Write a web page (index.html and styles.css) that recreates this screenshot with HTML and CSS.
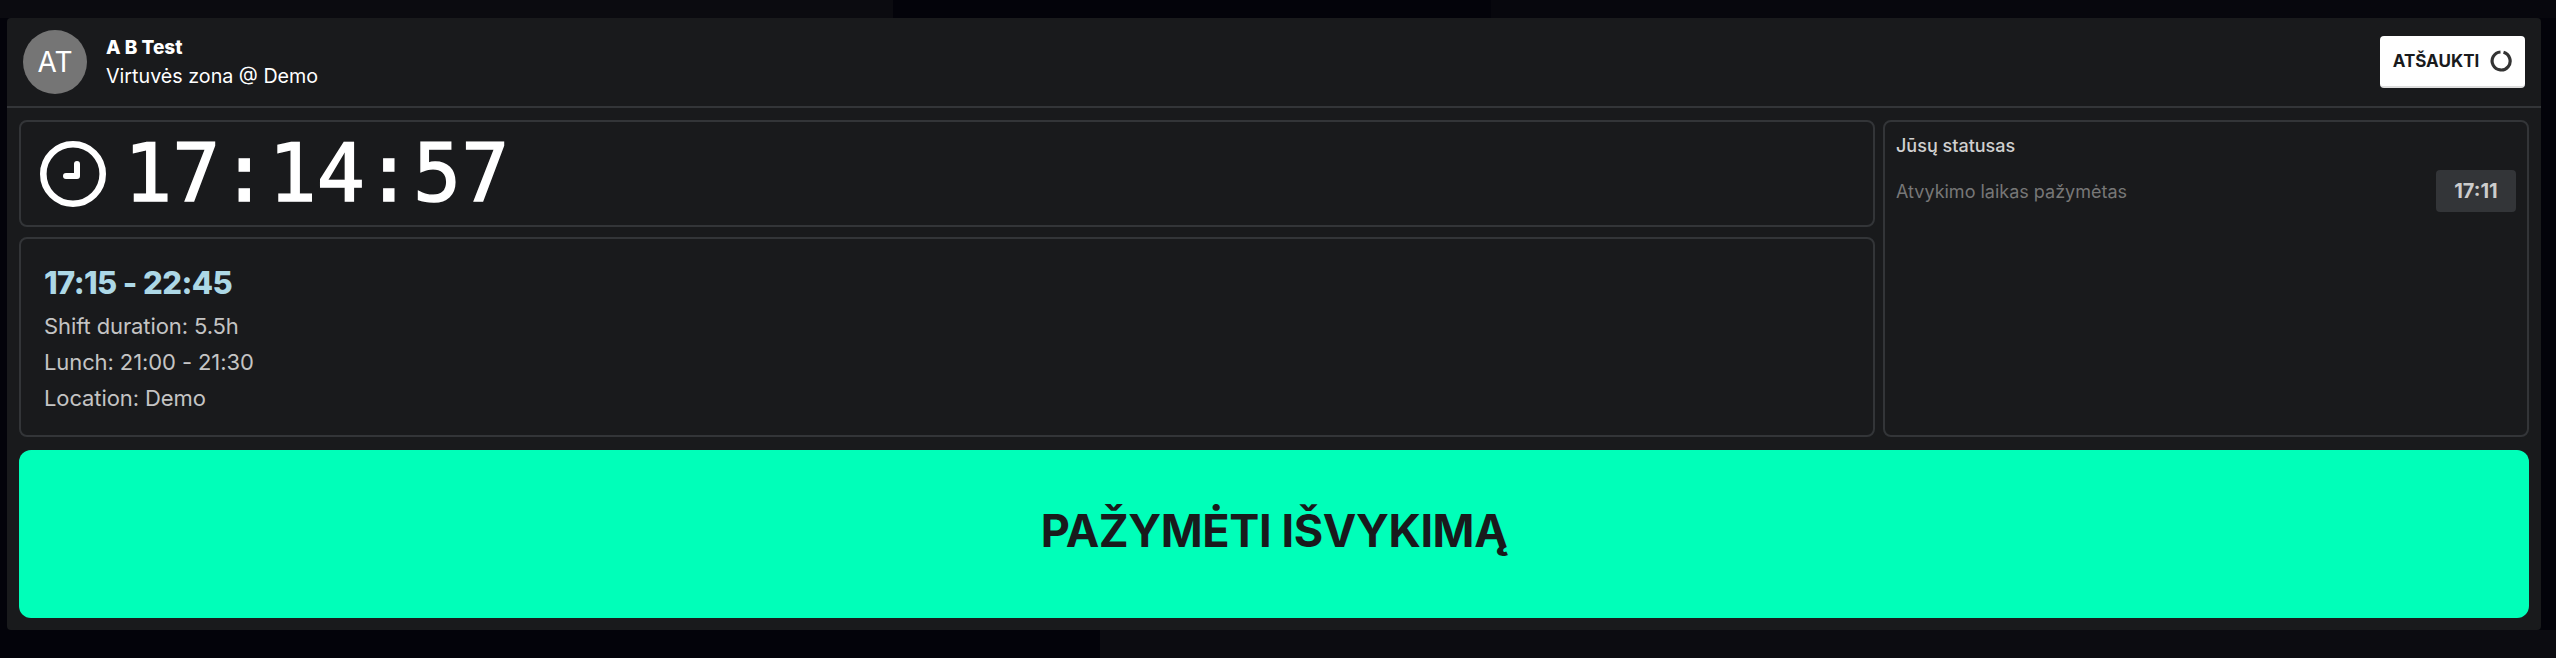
FILE: index.html
```html
<!DOCTYPE html>
<html lang="en">
<head>
    <meta charset="UTF-8">
    <meta name="viewport" content="width=device-width, initial-scale=1.0">
    <title>Kiosk</title>
    <link rel="stylesheet" href="styles.css">
</head>
<body>
    <div class="panel">
        <header class="top-bar">
            <div class="avatar">AT</div>
            <div class="user">
                <div class="user-name">A B Test</div>
                <div class="user-zone">Virtuvės zona @ Demo</div>
            </div>
            <button class="cancel-button">
                ATŠAUKTI
                <svg class="spinner" viewBox="0 0 22 22">
                    <path d="M13.5 2.3 A9 9 0 1 1 10.5 2" fill="none" stroke="#333" stroke-width="3.2"/>
                </svg>
            </button>
        </header>

        <main class="content">
            <div class="cards">
                <div class="left-column">
                    <div class="card clock-card">
                        <svg class="clock-icon" viewBox="0 0 66 66">
                            <circle cx="33" cy="33" r="29.7" fill="none" stroke="#fff" stroke-width="6.6"/>
                            <path d="M37 23 V35 H26" fill="none" stroke="#fff" stroke-width="6" stroke-linecap="round" stroke-linejoin="round"/>
                        </svg>
                        <div class="clock-time">17:14:57</div>
                    </div>
                    <div class="card shift-card">
                        <div class="shift-time">17:15 - 22:45</div>
                        <div class="shift-line">Shift duration: 5.5h</div>
                        <div class="shift-line">Lunch: 21:00 - 21:30</div>
                        <div class="shift-line">Location: Demo</div>
                    </div>
                </div>
                <div class="card status-card">
                    <div class="status-title">Jūsų statusas</div>
                    <div class="status-row">
                        <span class="status-label">Atvykimo laikas pažymėtas</span>
                        <span class="status-badge">17:11</span>
                    </div>
                </div>
            </div>
            <button class="action-button">PAŽYMĖTI IŠVYKIMĄ</button>
        </main>
    </div>
</body>
</html>
```

FILE: styles.css
```css
* {
    margin: 0;
    padding: 0;
    box-sizing: border-box;
}

html, body {
    height: 100%;
}

body {
    font-family: Inter, "Noto Sans", sans-serif;
    background:
        linear-gradient(to right, #0b0b10 893px, #03030a 893px, #03030a 1491px, #07070d 1491px) top / 100% 18px no-repeat,
        linear-gradient(to right, #03030a 1100px, #0c0c11 1100px) bottom / 100% 28px no-repeat,
        #03030a;
    padding: 18px 15px 28px 7px;
    color: #fff;
    overflow: hidden;
}

.panel {
    height: 100%;
    background: #191a1c;
    border-radius: 4px;
    display: flex;
    flex-direction: column;
}

.top-bar {
    height: 90px;
    padding: 0 16px;
    border-bottom: 2px solid #333538;
    display: flex;
    align-items: center;
}

.avatar {
    width: 64px;
    height: 64px;
    border-radius: 50%;
    background: #757575;
    font-size: 28px;
    display: flex;
    align-items: center;
    justify-content: center;
}

.user {
    margin-left: 19px;
    flex: 1;
}

.user-name {
    font-size: 19px;
    font-weight: 800;
    line-height: 28px;
}

.user-zone {
    font-size: 19.7px;
    line-height: 28px;
}

.cancel-button {
    width: 145px;
    height: 52px;
    background: #fff;
    border: none;
    border-bottom: 2px solid #ddd;
    border-radius: 4px;
    color: #191a1c;
    font-family: inherit;
    font-size: 17px;
    font-weight: 700;
    display: flex;
    align-items: center;
    justify-content: center;
    gap: 11px;
}

.spinner {
    width: 22px;
    height: 22px;
}

.content {
    flex: 1;
    padding: 12px;
    display: flex;
    flex-direction: column;
    gap: 13px;
}

.cards {
    display: flex;
    gap: 8px;
}

.left-column {
    flex: 1;
    display: flex;
    flex-direction: column;
    gap: 10px;
}

.card {
    border: 2px solid #333538;
    border-radius: 8px;
}

.clock-card {
    height: 107px;
    padding-left: 19px;
    display: flex;
    align-items: center;
    gap: 18px;
}

.clock-icon {
    width: 66px;
    height: 66px;
}

.clock-time {
    font-family: "DejaVu Sans Mono", monospace;
    font-size: 80px;
    line-height: 1;
    -webkit-text-stroke: 1.5px #fff;
}

.shift-card {
    height: 200px;
    padding: 22px 23px;
}

.shift-time {
    color: #add8e6;
    font-size: 31px;
    font-weight: 800;
    letter-spacing: -0.6px;
    line-height: 44px;
    margin-bottom: 3px;
}

.shift-line {
    color: #c4c4c4;
    font-size: 22px;
    letter-spacing: -0.1px;
    line-height: 36px;
}

.status-card {
    width: 646px;
    padding: 12px 11px;
}

.status-title {
    color: #d0d0d0;
    font-size: 18px;
    line-height: 24px;
    font-weight: 500;
}

.status-row {
    margin-top: 12px;
    display: flex;
    align-items: center;
    justify-content: space-between;
}

.status-label {
    color: #777;
    font-size: 18px;
}

.status-badge {
    width: 80px;
    height: 42px;
    background: #333538;
    border-radius: 4px;
    color: #ccc;
    font-size: 20px;
    font-weight: 700;
    display: flex;
    align-items: center;
    justify-content: center;
}

.action-button {
    flex: 1;
    padding-bottom: 8px;
    background: #00ffb9;
    border: none;
    border-radius: 12px;
    color: #191a1c;
    font-family: inherit;
    font-size: 45px;
    font-weight: 700;
    letter-spacing: -0.4px;
}
```
